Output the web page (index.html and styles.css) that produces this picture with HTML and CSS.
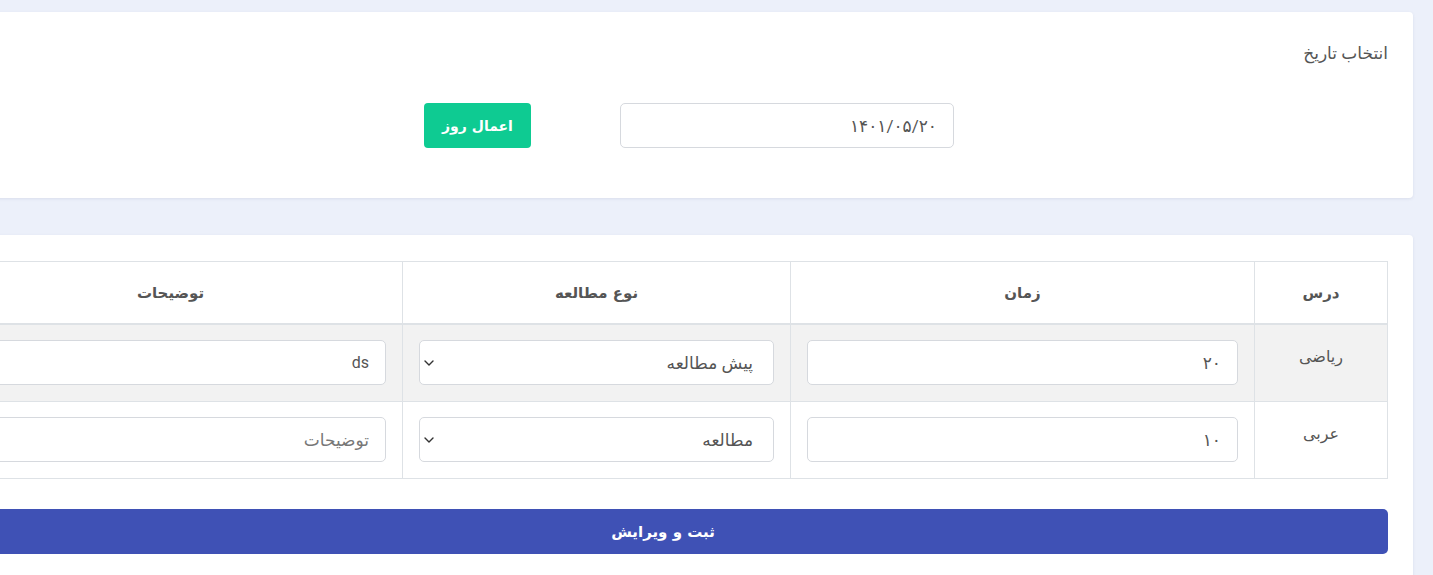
FILE: index.html
```html
<!DOCTYPE html>
<html dir="rtl" lang="fa">
<head>
<meta charset="utf-8">
<title>برنامه مطالعه</title>
<link rel="stylesheet" href="styles.css">
</head>
<body>
<main class="page">
  <section class="card date-card">
    <div class="card-title">انتخاب تاریخ</div>
    <div class="date-row">
      <input class="form-control date-input" type="text" value="۱۴۰۱/۰۵/۲۰">
      <button class="btn btn-green" type="button">اعمال روز</button>
    </div>
  </section>

  <section class="card table-card">
    <table class="study-table">
      <colgroup>
        <col class="c-lesson">
        <col class="c-time">
        <col class="c-type">
        <col class="c-desc">
      </colgroup>
      <thead>
        <tr>
          <th>درس</th>
          <th>زمان</th>
          <th>نوع مطالعه</th>
          <th>توضیحات</th>
        </tr>
      </thead>
      <tbody>
        <tr class="striped">
          <td class="lesson">ریاضی</td>
          <td><input class="form-control" type="text" value="۲۰"></td>
          <td>
            <div class="select-wrap">
              <select class="form-control form-select">
                <option selected>پیش مطالعه</option>
                <option>مطالعه</option>
              </select>
              <svg class="chev" width="10" height="6" viewBox="0 0 10 6" aria-hidden="true"><path d="M1 1l4 4 4-4" fill="none" stroke="#333" stroke-width="1.4" stroke-linecap="round" stroke-linejoin="round"/></svg>
            </div>
          </td>
          <td><input class="form-control latin" type="text" value="ds"></td>
        </tr>
        <tr>
          <td class="lesson">عربی</td>
          <td><input class="form-control" type="text" value="۱۰"></td>
          <td>
            <div class="select-wrap">
              <select class="form-control form-select">
                <option>پیش مطالعه</option>
                <option selected>مطالعه</option>
              </select>
              <svg class="chev" width="10" height="6" viewBox="0 0 10 6" aria-hidden="true"><path d="M1 1l4 4 4-4" fill="none" stroke="#333" stroke-width="1.4" stroke-linecap="round" stroke-linejoin="round"/></svg>
            </div>
          </td>
          <td><input class="form-control" type="text" placeholder="توضیحات"></td>
        </tr>
      </tbody>
    </table>
    <button class="btn btn-primary btn-block" type="button">ثبت و ویرایش</button>
  </section>
</main>
</body>
</html>
```

FILE: styles.css
```css
html {
  background: #ecf0fa;
  overflow: hidden;
}

body {
  margin: 0;
  overflow: hidden;
  font-family: Roboto, "DejaVu Sans", sans-serif;
  color: #555;
}

.page {
  width: 1500px;
  margin-right: 20px;
  padding-top: 12px;
}

.card {
  background: #fff;
  border-radius: 4px;
  box-shadow: 0 1px 3px rgba(90, 100, 140, 0.12);
  padding: 0 25px;
}

.date-card {
  padding-top: 29px;
  padding-bottom: 50px;
}

.card-title {
  font-size: 17px;
  line-height: 24px;
  color: #555;
}

.date-row {
  display: flex;
  align-items: center;
  gap: 89px;
  margin-top: 38px;
  padding-right: 434px;
}

.form-control {
  box-sizing: border-box;
  height: 45px;
  width: 100%;
  border: 1px solid #d6d9de;
  border-radius: 5px;
  background: #fff;
  padding: 0 16px;
  font-family: Roboto, "DejaVu Sans", sans-serif;
  font-size: 17px;
  color: #555;
  outline: none;
  margin: 0;
}

.form-control::placeholder {
  color: #777;
}

.latin {
  font-size: 16px;
}

.date-input {
  width: 334px;
}

.btn {
  box-sizing: border-box;
  border: 0;
  border-radius: 4px;
  color: #fff;
  font-family: "DejaVu Sans", sans-serif;
  font-weight: bold;
  font-size: 14px;
  height: 45px;
  cursor: pointer;
}

.btn-green {
  width: 107px;
  background: #0ecb92;
}

.table-card {
  margin-top: 37px;
  padding-top: 26px;
  padding-bottom: 30px;
}

.study-table {
  width: 100%;
  table-layout: fixed;
  border-collapse: collapse;
  font-size: 15px;
}

.c-lesson { width: 133px; }
.c-time { width: 464px; }
.c-type { width: 388px; }

.study-table th,
.study-table td {
  border: 1px solid #dee2e6;
  text-align: center;
}

.study-table th {
  height: 61px;
  padding: 0 16px;
  font-family: "DejaVu Sans", sans-serif;
  font-weight: bold;
  font-size: 15px;
  color: #555;
  border-bottom: 2px solid #dee2e6;
}

.study-table td {
  padding: 15px 16px 16px;
  vertical-align: middle;
}

.study-table td.lesson {
  vertical-align: top;
  padding-top: 22px;
  font-size: 16px;
  color: #555;
}

.study-table tr.striped td {
  background: #f2f2f2;
}

.select-wrap {
  position: relative;
}

.form-select {
  appearance: none;
  -webkit-appearance: none;
  padding-right: 20px;
}

.chev {
  position: absolute;
  left: 5px;
  top: 20px;
  pointer-events: none;
}

.btn-primary {
  background: #3f51b5;
  border-radius: 5px;
}

.btn-block {
  display: block;
  width: 100%;
  margin-top: 30px;
  font-size: 15px;
}
```
